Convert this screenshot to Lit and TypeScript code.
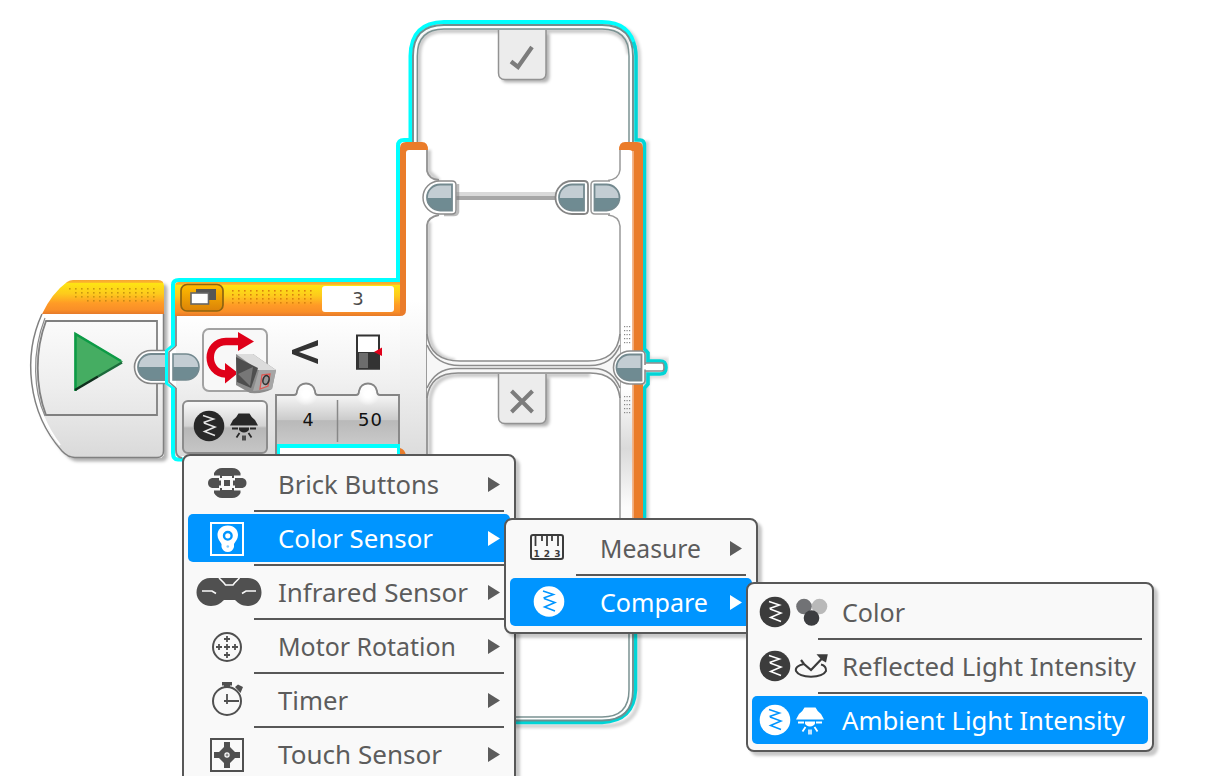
import { LitElement, html, svg, css, nothing } from "lit";
import { customElement, property } from "lit/decorators.js";

type Item = { label: string; icon: string; width: number; active?: boolean; sub?: boolean };

const squiggle = "M-6 -10.5L4.5 -7L-5.5 -3.500M-5 -3L6 1L-4.500 5.500L6 9.500";

/** Round "compare" symbol. */
const compare = (x: number, y: number, disc: string, line: string) => svg`
  <g transform="translate(${x} ${y})">
    <circle r="15.3" fill=${disc} />
    <path d=${squiggle} fill="none" stroke=${line} stroke-width="1.5" />
  </g>`;

/** Lamp symbol with rays. */
const lamp = (x: number, y: number, c: string) => svg`
  <g transform="translate(${x} ${y})" fill=${c}>
    <path d="M-5.500 -13.500H5.500Q7 -10 11 -7L14 -1.500H-14L-11 -7Q-7 -10 -5.500 -13.500Z" />
    <path d="M-12 0.500H-6V2.500H-12ZM6 0.500H12V2.500H6ZM-5 0.500H5V2.500Q4 5 0 5.500Q-4 5 -5 2.500Z" />
    <path d="M-4.500 6L-7.500 10.500M4.500 6L7.500 10.500" stroke=${c} stroke-width="1.800" />
    <path d="M0 8.500V13.500" stroke=${c} stroke-width="4" opacity=".75" />
  </g>`;

/** Menu icons, drawn on a 90 x 48 area at the left of a row. */
function icon(name: string, c: string, back: string) {
  switch (name) {
    case "brick":
      return svg`<g fill=${c}>
        <path d="M26 15.500V13Q29 8 34 8H44Q50 8 52.500 13V15.500H46V18H44V16H34V18H32V15.500Z"/>
        <path d="M26 30.500V33Q29 38 34 38H44Q50 38 52.500 33V30.500H46V28H44V30H34V28H32V30.500Z"/>
        <path d="M20 23Q20 19 24 18H31V20.500H33V25.500H31V28H24Q20 27 20 23Z"/>
        <path d="M58.500 23Q58.500 19 54.500 18H47V20.500H45V25.500H47V28H54.500Q58.500 27 58.500 23Z"/>
        <rect x="36" y="20" width="6" height="6"/></g>`;
    case "color":
      return svg`<rect x="23" y="9" width="32" height="32" fill="none" stroke=${c} stroke-width="2"/>
        <path d="M39.800 11.500C33 11.500 29.500 16 29.500 21C29.500 25 32 27.500 33.500 30V33Q35 38 39.800 38Q44.500 38 46 33V30C47.500 27.500 50 25 50 21C50 16 46.500 11.500 39.800 11.500Z" fill=${c}/>
        <circle cx="39.800" cy="21.800" r="3.800" fill="none" stroke=${back} stroke-width="2.400"/>
        <circle cx="39.800" cy="32.500" r="1.300" fill=${back} opacity=".5"/>`;
    case "infrared":
      return svg`<path d="M22 10H60C69 10 73.500 17 73.500 24.500C73.500 32 68 38 60 38C54 38 50 35 47 32H36C33 35 29 38 23 38C15 38 8.500 32 8.500 24.500C8.500 17 14 10 22 10Z" fill=${c}/>
        <path d="M31 10L36 15L37.500 17H45L46.500 15L51.500 10M14 23H24L28 25.500M68 23H58L54 25.500" fill="none" stroke=${back} stroke-width="1.600"/>`;
    case "motor":
      return svg`<circle cx="39" cy="25" r="14" fill="none" stroke=${c} stroke-width="2"/>
        <path d="M36 25H42M39 22V28M28 25H34M31 22V28M44 25H50M47 22V28M36 17H42M39 14V20M36 33H42M39 30V36" stroke=${c} stroke-width="1.800"/>`;
    case "timer":
      return svg`<circle cx="39" cy="25" r="14" fill="none" stroke=${c} stroke-width="2"/>
        <path d="M34 6H44V9.500H42V12H36V9.500H34ZM47 11L50 8.500L55 11L52.500 17Z" fill=${c}/>
        <path d="M39 18V28M36 25H51" stroke=${c} stroke-width="1.800"/>`;
    case "touch":
      return svg`<rect x="23" y="9" width="32" height="32" fill="none" stroke=${c} stroke-width="2"/>
        <path d="M36 12H42V17L47 22H52V28H47L42 33V38H36V33L31 28H26V22H31L36 17Z" fill=${c}/>
        <circle cx="39" cy="25" r="2.700" fill=${back}/><path d="M37.500 25H40.500M39 23.500V26.500" stroke=${c} stroke-width=".8"/>`;
    case "measure":
      return svg`<rect x="21" y="11" width="32" height="24" rx="2" fill="none" stroke="#3c3c3c" stroke-width="2"/>
        <path d="M25.500 11V22M32 11V17M37 11V22M42 11V17M48 11V22" stroke="#3c3c3c" stroke-width="1.800"/>
        <text class="tick" x="23.500" y="32.500" textLength="27">123</text>`;
    case "compare":
      return compare(39, 23.5, c, back);
    case "cmp-color":
      return svg`${compare(23, 24, "#3c3c3c", "#fff")}
        <circle cx="67.500" cy="18.500" r="7.800" fill="#b9b9b9"/>
        <circle cx="52" cy="18.500" r="7.800" fill="#717275"/>
        <circle cx="59.500" cy="30" r="7.800" fill="#3c3d40"/>`;
    case "cmp-reflect":
      return svg`${compare(23, 24, "#3c3c3c", "#fff")}
        <path d="M52 22C46 23 43 26 44 29C48 36.500 70 36.500 74 29Q74.500 24 69 22.500" fill="none" stroke="#3c3c3c" stroke-width="2"/>
        <path d="M49 18L52 22L59 28L70 16.500" fill="none" stroke="#3c3c3c" stroke-width="2.200"/>
        <path d="M64.500 12.300H75.800L74 20.500L69.500 18Z" fill="#3c3c3c"/>`;
    default:
      return svg`${compare(23, 24, c, back)}${lamp(58, 25, c)}`;
  }
}

@customElement("popup-menu")
class PopupMenu extends LitElement {
  @property({ attribute: false }) items: Item[] = [];

  static styles = css`
    :host { display: block; box-sizing: border-box; border: 2px solid #585858; border-radius: 8px;
      background: #f9f9f9; padding: 4px 4px 6px; box-shadow: 4px 4px 3px rgba(0, 0, 0, 0.22); }
    .row { display: flex; height: 48px; border-radius: 5px; color: #5c5c5c; }
    .row.active { background: #0095ff; color: #fff; }
    .label { flex: 1; min-width: 0; height: 48px; overflow: visible; }
    .icon, .arrow { flex: none; display: block; }
    text { font-family: "Noto Sans", sans-serif; font-size: 25px; fill: currentColor; }
    .tick { font-family: "DejaVu Sans", sans-serif; font-weight: bold; font-size: 9px; fill: #3c3c3c; }
    .line { height: 2px; margin: 2px 6px 2px 66px; background: #585858; }
  `;

  render() {
    return this.items.map((it, i) => html`
      ${i ? html`<div class="line"></div>` : nothing}
      <div class="row ${it.active ? "active" : ""}">
        <svg class="icon" width="90" height="48">${icon(it.icon, it.active ? "#fff" : "#505050", it.active ? "#0095ff" : "#f9f9f9")}</svg>
        <svg class="label"><text x="0" y="34" textLength=${it.width} lengthAdjust="spacingAndGlyphs">${it.label}</text></svg>
        ${it.sub ? html`<svg class="arrow" width="22" height="48"><path d="M0 17L12 24.500L0 32Z" fill="currentColor"/></svg>` : nothing}
      </div>`);
  }
}

const range = (n: number) => Array.from({ length: n }, (_, i) => i);

const dots = (x: number, y: number, cols: number, rows: number, dx: number, dy: number, c: string, s = 1.6) =>
  range(rows).map((r) => range(cols).map((k) => svg`<rect x=${x + k * dx} y=${y + r * dy} width=${s} height=${s} fill=${c}/>`));

/** D-shaped sequence plug; dir -1 is rounded on the left, 1 on the right. */
const plug = (x: number, y: number, dir: number) => {
  const d = dir < 0
    ? "M25 0H13A13 13 0 0 0 13 26H25Z"
    : "M0 0H12A13 13 0 0 1 12 26H0Z";
  return svg`<path transform="translate(${x} ${y})" d=${d} fill="url(#plug)" stroke="#73898f" stroke-width="1.8"/>`;
};

@customElement("program-canvas")
class ProgramCanvas extends LitElement {
  static styles = css`
    :host { display: block; }
    svg { display: block; }
    text { font-family: "DejaVu Sans", sans-serif; }
  `;

  render() {
    return html`<svg width="1214" height="776" viewBox="0 0 1214 776">
      <defs>
        <linearGradient id="plug" x2="0" y2="1"><stop offset=".5" stop-color="#c3cdd3"/><stop offset=".5" stop-color="#6f8b92"/></linearGradient>
        <linearGradient id="head" x2="0" y2="1"><stop stop-color="#f7a531"/><stop offset=".07" stop-color="#fbb62b"/><stop offset=".1" stop-color="#fee413"/><stop offset=".4" stop-color="#fdcb1c"/><stop offset=".68" stop-color="#ff9b26"/><stop offset=".88" stop-color="#f98f28"/><stop offset="1" stop-color="#e67a2a"/></linearGradient>
        <linearGradient id="body" gradientUnits="userSpaceOnUse" x1="0" y1="316" x2="0" y2="458"><stop stop-color="#fff"/><stop offset=".45" stop-color="#f1f1f1"/><stop offset="1" stop-color="#d9d9d9"/></linearGradient>
        <linearGradient id="side" gradientUnits="userSpaceOnUse" x1="0" y1="300" x2="0" y2="456"><stop stop-color="#fff"/><stop offset=".55" stop-color="#eee"/><stop offset="1" stop-color="#dcdcdc"/></linearGradient>
        <linearGradient id="rail" gradientUnits="userSpaceOnUse" x1="0" y1="390" x2="0" y2="520"><stop stop-color="#fdfdfd"/><stop offset=".45" stop-color="#dadada"/><stop offset=".9" stop-color="#fcfcfc"/></linearGradient>
        <linearGradient id="btn" x2="0" y2="1"><stop stop-color="#fafafa"/><stop offset=".48" stop-color="#d3d3d3"/><stop offset=".52" stop-color="#b7b7b7"/><stop offset="1" stop-color="#c6c6c6"/></linearGradient>
        <linearGradient id="nums" gradientUnits="userSpaceOnUse" x1="0" y1="384" x2="0" y2="444"><stop stop-color="#fff"/><stop offset=".25" stop-color="#efefef"/><stop offset=".6" stop-color="#cbcbcb"/><stop offset=".61" stop-color="#b9b9b9"/><stop offset="1" stop-color="#c9c9c9"/></linearGradient>
        <linearGradient id="gold" x2="0" y2="1"><stop stop-color="#ffbd00"/><stop offset="1" stop-color="#db8208"/></linearGradient>
        <radialGradient id="glow"><stop offset=".3" stop-color="#fff"/><stop offset="1" stop-color="#fff" stop-opacity="0"/></radialGradient>
        <filter id="sh" x="-20%" y="-20%" width="150%" height="150%"><feDropShadow dx="3.500" dy="3.500" stdDeviation="1.500" flood-color="#000" flood-opacity=".3"/></filter>
        <filter id="soft"><feGaussianBlur stdDeviation="1.5"/></filter>
        <clipPath id="cells"><path d="M417 29H629V150H619V361H457H427V150H417ZM427 372H620V720H427Z"/></clipPath>
      </defs>

      <!-- start block -->
      <g filter="url(#sh)">
        <path d="M70 280H158Q164 280 164 286V452Q164 458 158 458H75Q68 458 63 452C20 407 20 333 54 294Q64 280 70 280Z" fill="#fff"/>
      </g>
      <path d="M46 314H163V457H75Q68 457 63 451C32 416 28 358 46 314Z" fill="url(#body)"/>
      <path d="M42 314C23 355 27 412 62 451Q68 457.500 75 457.500H157Q163.500 457.500 163.500 451V314" fill="none" stroke="#808080" stroke-width="1.500"/>
      <path d="M43.500 316C27 356 31 408 60 445" fill="none" stroke="#fff" stroke-width="2"/>
      <path d="M45 318C31 354 34 392 45 416" fill="none" stroke="#8c8c8c" stroke-width="1.200"/>
      <path d="M46 321H157V415H46C35 386 35 350 46 321Z" fill="url(#side)" stroke="#808080" stroke-width="1.800"/>
      <path d="M42 314Q52 293 67 282Q70 280 73 280H158Q164 280 164 286V314Z" fill="url(#head)"/>
      ${dots(69, 288, 15, 1, 6, 4, "#c99710")}
      ${dots(75, 292, 14, 1, 6, 4, "#c99710")}
      ${dots(75, 296, 14, 1, 6, 4, "#c99710")}
      ${dots(87, 300, 12, 1, 6, 4, "#c98718")}
      <path d="M74.500 332.500V391L123 361.500Z" fill="#45ad62"/>
      <path d="M75.500 391V334L121 361" fill="none" stroke="#0d9b46" stroke-width="2.500"/>
      <path d="M75 390L98 376.500" stroke="#10301e" stroke-width="2.600"/>
      <path d="M98 376.500L122 362.500" stroke="#1c6b3c" stroke-width="2.400"/>
      <path d="M165 350.500H151A16.500 16.500 0 0 0 151 383.500H165" fill="#fff" stroke="#858585" stroke-width="1.600"/>
      <path d="M166 354H151A13 13 0 0 0 151 380H166Z" fill="url(#plug)" stroke="#73898f" stroke-width="1.800"/>

      <!-- case frame and selection outline -->
      <g fill="none" stroke="#000" stroke-width="4" opacity=".18" filter="url(#soft)" transform="translate(3 3)">
        <path d="M444 22H602Q636 22 636 56V140H644V520M636 600V690Q636 723 602 723H500"/>
      </g>
      <path d="M644 520V352L650 360H666V376H650L644 386" fill="none" stroke="#aaa" stroke-width="5" opacity=".4" filter="url(#soft)"/>
      <path d="M412 460V56Q412 24 444 24H602Q634 24 634 56V690Q634 722 602 722H430V460Z" fill="#fff"/>
      <path d="M184 459.500H178Q173 459.500 173 453V387L167 383V351L173 346V285Q173 280 179 280H398V146Q398 140 404 140H410.500V56Q411 22.500 444 22H602Q630 22 635 48" fill="none" stroke="#00ffff" stroke-width="4"/>
      <path d="M633 42Q636 48 636 56V140H640Q644.500 140 644.500 146V349L648 353V361H660Q666 361 666 367.500Q666 374 660 374H648V384L644.500 388V520M635.500 600V690Q634 721 602 722.500H430" fill="none" stroke="#00d5d6" stroke-width="3.600"/>
      <path d="M413 150V56Q413 25 444 25H602Q633 25 633 56V690Q633 720.500 602 720.500H430" fill="none" stroke="#6f8f90" stroke-width="1.900"/>
      <g clip-path="url(#cells)" fill="none" stroke="#000" stroke-width="4" opacity=".22" filter="url(#soft)">
        <path d="M419 150V56Q419 31 443 31H603Q627 31 629 54M429 150V172L439 181M429 222V332Q431 358 455 361M430 460V400Q433 375 460 375H590"/>
      </g>
      <path d="M417.300 150V56Q417.300 29 444 29H602Q629 29 629 56V150M629 600V690Q629 717 602 717H430" fill="none" stroke="#7b9292" stroke-width="1.500"/>

      <!-- tabs of the two cases -->
      <g filter="url(#sh)"><path d="M498 30H546V73Q546 79 540 79H504Q498 79 498 73Z" fill="#ececec"/></g>
      <path d="M498.500 30V73Q498.500 79.500 505 79.500H540Q546 79.500 546 73V30" fill="none" stroke="#929292" stroke-width="1.500"/>
      <path d="M511 61.500L518 67L532 47" fill="none" stroke="#7c7c7c" stroke-width="4.200"/>

      <!-- left column -->
      <path d="M405 150H427V172Q429 179 439 180V215Q428 217 427 224V456H175V388L168 383V351L175 346V316H400Z" fill="url(#body)"/>
      <path d="M406 300H427V456H400V316Z" fill="url(#side)"/>
      <path d="M427 150V171Q429 179.500 439 180M439 215Q428 217 427 225V456" fill="none" stroke="#929292" stroke-width="1.800"/>
      <path d="M400 282V148Q400 142 406 142H422Q428 142 428 150H409Q406 150 406 153V310Q406 316 400 316Z" fill="#ea7c2a"/>

      <!-- right column -->
      <path d="M619 150H633V520H620V222Q618 216 608 215V180Q618 179 619 172Z" fill="#fff"/>
      <path d="M620 390H633V520H620Z" fill="url(#rail)"/>
      <path d="M620 150V170Q619 179 608 180.500M608 215Q619 216 620 226V520" fill="none" stroke="#999" stroke-width="1.500"/>
      <path d="M619 150Q619 142 625 142H637Q643 142 643 148V520H633V154Q633 150 629 150Z" fill="#ea7c2a"/>
      <path d="M633 151V520" stroke="#f2b184" stroke-width="1.800"/>

      <!-- middle bar -->
      <path d="M427 334Q430 361 460 361H588Q617 361 620 334V398Q616 373 588 373H458Q430 373 427 398Z" fill="#f7f7f7"/>
      <g fill="none" stroke="#8c8c8c" stroke-width="1.600">
        <path d="M427 334Q430 361 460 361H588Q617 361 620 334"/>
        <path d="M427 345Q436 365.500 460 365.500H590Q612 365.500 620 345"/>
        <path d="M427 388Q436 368.500 455 368.500H594Q612 368.500 620 388"/>
        <path d="M427 398Q430 373 458 373H590Q617 373 620 398"/>
      </g>
      <g filter="url(#sh)"><path d="M498 374H546V417Q546 423 540 423H504Q498 423 498 417Z" fill="#ececec"/></g>
      <path d="M498.500 374V417Q498.500 423.500 505 423.500H540Q546 423.500 546 417V374" fill="none" stroke="#929292" stroke-width="1.500"/>
      <path d="M511.500 391L532.500 412M532.500 391L511.500 412" stroke="#7c7c7c" stroke-width="4"/>
      ${dots(624, 326, 3, 5, 2.5, 4, "#888", 1.2)}
      ${dots(624, 396, 3, 5, 2.5, 4, "#888", 1.2)}

      <!-- sequence wire and plugs -->
      <rect x="456" y="192" width="100" height="4" fill="#d9d9d9"/><rect x="456" y="196" width="100" height="4" fill="#a6a6a6"/>
      <path d="M458 184V212Q457 215 454 215H444" fill="none" stroke="#777" stroke-width="2.500" opacity=".5"/>
      <path d="M452 181H439.500A16.500 16.500 0 0 0 439.500 214H452Q456 214 456 210V185Q456 181 452 181Z" fill="#fff" stroke="#8c8c8c" stroke-width="1.500"/>
      ${plug(427, 184.5, -1)}
      <path d="M584 181H572A16.500 16.500 0 0 0 572 214H584Q588 214 588 210V185Q588 181 584 181Z" fill="#fff" stroke="#858585" stroke-width="1.800"/>
      ${plug(559, 184.5, -1)}
      <path d="M610 181H595Q591 181 591 185V210Q591 214 595 214H610" fill="#fff" stroke="#999" stroke-width="1.500"/>
      ${plug(594.5, 184.5, 1)}
      <path d="M644 363H662Q664 363 664 368Q664 371 662 371H644Z" fill="#fff" stroke="#8c8c8c" stroke-width="1.600"/>
      <path d="M641 351H630A16.500 16.500 0 0 0 630 384H641Q645 384 645 380V355Q645 351 641 351Z" fill="#fff" stroke="#8c8c8c" stroke-width="1.600"/>
      <path d="M643.500 365H662V369.500H643.500Z" fill="#fff"/>
      ${plug(616.5, 354.5, -1)}

      <!-- switch header -->
      <path d="M175 316V286Q175 282 179 282H400V316Z" fill="url(#head)"/>
      <rect x="181" y="284.500" width="42" height="26.500" rx="6" fill="url(#gold)" stroke="#8d6410" stroke-width="1.700"/>
      <rect x="196" y="289" width="20" height="11" fill="#555"/>
      <rect x="191" y="293" width="17.500" height="11" fill="#fff" stroke="#666" stroke-width="1.600"/>
      ${dots(232, 290, 14, 4, 6, 4, "#d9820f")}
      <rect x="322" y="286" width="72" height="26" rx="3" fill="#fff"/>
      <text x="358" y="305" font-size="18" text-anchor="middle" fill="#4c4c4c">3</text>

      <!-- switch body -->
      <path d="M176 316V346M176 388V450Q176 457 182 458" fill="none" stroke="#858585" stroke-width="1.800"/>
      <path d="M176 346L169 352V382L176 388" fill="#fff" stroke="#858585" stroke-width="1.600"/>
      <path d="M173 354H186A13 13 0 0 1 186 380H173Z" fill="url(#plug)" stroke="#73898f" stroke-width="1.600"/>
      <rect x="203" y="329" width="64" height="62" rx="6" fill="#f8f8f8" stroke="#a2a2a2" stroke-width="2"/>
      <path d="M240 341.500H226C205 342 205 373 226 374" fill="none" stroke="#df0019" stroke-width="7.500"/>
      <path d="M238 332L254 341.500L238 351ZM225 363L238 373L225 383.500Z" fill="#df0019"/>
      <path d="M236 354L253 354L276 370L272 389Q264 394 250 393L236 385Z" fill="#8b8b8b"/>
      <path d="M236 354L253 354L276 370L258 370Z" fill="#dcdcdc"/>
      <path d="M236 357L258 368L251 388L237 382Z" fill="#4e4e4e"/>
      <path d="M238 374L253 367L250 386Z" fill="#777"/>
      <path d="M259 370L276 370L272 389L253 391Z" fill="#a6a6a6"/>
      <path d="M262 375L270 374L268 386L260 389Z" fill="#b6b3b3" stroke="#dc5a54" stroke-width="1.300"/>
      <ellipse cx="266" cy="380" rx="3" ry="4.500" fill="#999" stroke="#333" stroke-width="1.600" transform="rotate(15 266 380)"/>
      <path d="M318 340L292 350V354L318 364V359L299 352L318 345.500Z" fill="#333"/>
      <rect x="357" y="335.500" width="22" height="33" fill="#fff" stroke="#333" stroke-width="2"/>
      <rect x="356" y="352" width="24" height="17.500" fill="#333"/><rect x="359" y="353" width="9" height="15" fill="#6c6c6c"/>
      <path d="M374 352L382 347.500V356Z" fill="#df0019"/>

      <rect x="183" y="401" width="84" height="52" rx="5" fill="url(#btn)" stroke="#8c8c8c" stroke-width="2"/>
      ${compare(209, 426, "#282828", "#e6e6e6")}
      ${lamp(244, 427, "#282828")}
      <path d="M276 454V395H295C297 380 314 380 316 395H357C359 380 376 380 378 395H399V445H277Z" fill="url(#nums)"/>
      <circle cx="306" cy="394" r="12" fill="url(#glow)"/><circle cx="368" cy="394" r="12" fill="url(#glow)"/>
      <path d="M276 454V395H294Q297 395 297 391C299 381 313 381 315 391Q315 395 318 395H356Q359 395 359 391C361 381 375 381 377 391Q377 395 380 395H399V445" fill="none" stroke="#858585" stroke-width="1.900"/>
      <path d="M337.500 400V442" stroke="#888" stroke-width="1.500"/>
      <text x="308" y="425.500" font-size="17.500" text-anchor="middle" fill="#111">4</text>
      <text x="370" y="425.500" font-size="18" text-anchor="middle" textLength="24" fill="#111">50</text>
      <rect x="277" y="444" width="123" height="13" fill="#00ffff"/><rect x="280" y="448" width="117" height="9" fill="#fff"/>
      <path d="M400 448Q405 449 406 456H400Z" fill="#ea7c2a"/>
    </svg>`;
  }
}

const sensors: Item[] = [
  { label: "Brick Buttons", icon: "brick", width: 161, sub: true },
  { label: "Color Sensor", icon: "color", width: 155, sub: true, active: true },
  { label: "Infrared Sensor", icon: "infrared", width: 190, sub: true },
  { label: "Motor Rotation", icon: "motor", width: 178, sub: true },
  { label: "Timer", icon: "timer", width: 70, sub: true },
  { label: "Touch Sensor", icon: "touch", width: 164, sub: true },
];
const modes: Item[] = [
  { label: "Measure", icon: "measure", width: 101, sub: true },
  { label: "Compare", icon: "compare", width: 108, sub: true, active: true },
];
const kinds: Item[] = [
  { label: "Color", icon: "cmp-color", width: 63 },
  { label: "Reflected Light Intensity", icon: "cmp-reflect", width: 294 },
  { label: "Ambient Light Intensity", icon: "cmp-ambient", width: 283, active: true },
];

@customElement("app-root")
class AppRoot extends LitElement {
  static styles = css`
    :host { display: block; position: relative; width: 1214px; height: 776px; overflow: hidden; background: #fff; }
    popup-menu { position: absolute; }
    .sensors { left: 182px; top: 454px; width: 334px; }
    .modes { left: 504px; top: 518px; width: 254px; }
    .kinds { left: 746px; top: 582px; width: 408px; }
  `;

  render() {
    return html`<program-canvas></program-canvas>
      <popup-menu class="sensors" .items=${sensors}></popup-menu>
      <popup-menu class="modes" .items=${modes}></popup-menu>
      <popup-menu class="kinds" .items=${kinds}></popup-menu>`;
  }
}
